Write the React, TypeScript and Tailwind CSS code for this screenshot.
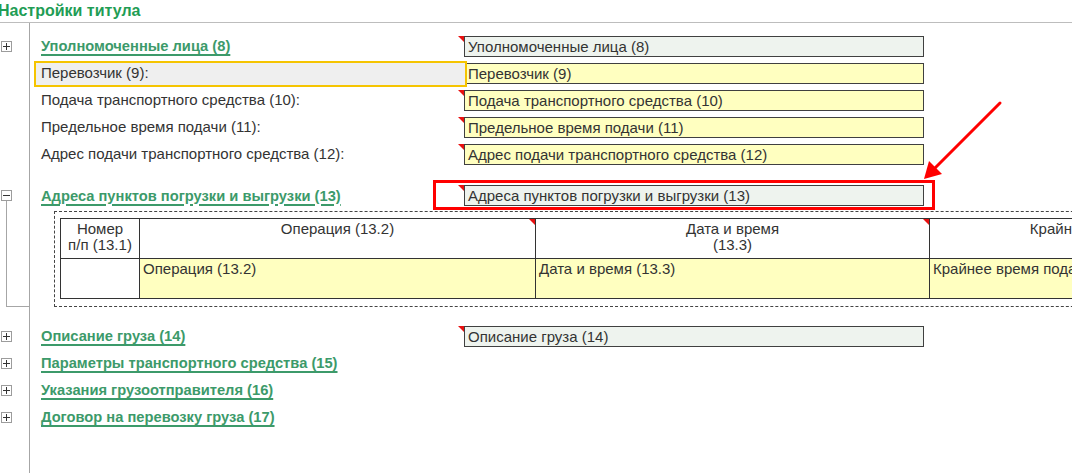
import React from 'react';

const font = { fontFamily: '"Liberation Sans", Arial, sans-serif' };

type Tree = 'plus' | 'minus' | 'none';

const TreeBox = ({ kind }: { kind: Tree }) => {
  if (kind === 'none') return null;
  return (
    <div className="relative w-[11px] h-[11px] border border-[#9c9c9c] bg-white ml-[1px]">
      <div className="absolute left-[1px] top-[4px] w-[7px] h-[1px] bg-[#333]" />
      {kind === 'plus' && <div className="absolute left-[4px] top-[1px] w-[1px] h-[7px] bg-[#333]" />}
    </div>
  );
};

const Corner = ({ className }: { className: string }) => (
  <div
    className={`absolute w-0 h-0 border-t-[6px] border-t-[#e81010] border-l-[6px] border-l-transparent ${className}`}
  />
);

const Field = ({ text, gray }: { text: string; gray?: boolean }) => (
  <div
    className={`relative w-[460px] h-[21px] border border-[#404040] pl-[3px] leading-[19px] text-[15px] text-[#333] whitespace-nowrap ${
      gray ? 'bg-[#eef3ee]' : 'bg-[#ffffc0]'
    }`}
  >
    <Corner className="-left-[7px] -top-[1px]" />
    {text}
  </div>
);

const Gutter = ({ children, className = '' }: { children?: React.ReactNode; className?: string }) => (
  <div className={`w-[30px] shrink-0 border-r border-[#a6a6a6] ${className}`}>{children}</div>
);

const groupText =
  'text-[14.7px] font-bold text-[#3c9a6a] underline decoration-2 underline-offset-[3px] whitespace-nowrap';

const Row = ({
  label,
  field,
  tree = 'none',
  group,
  selected,
  gray,
}: {
  label: string;
  field?: string;
  tree?: Tree;
  group?: boolean;
  selected?: boolean;
  gray?: boolean;
}) => (
  <div className="flex h-[27px]">
    <Gutter className="flex items-center">
      <TreeBox kind={tree} />
    </Gutter>
    <div className="flex items-center">
      <div
        className={`relative ml-[4px] flex items-center ${
          selected
            ? 'z-10 w-[433px] -mr-[3px] h-[26px] border-2 border-[#f5c400] bg-[#efefef] pl-[5px]'
            : 'w-[430px] pl-[7px]'
        }`}
      >
        <span className={group ? groupText : 'text-[15px] text-[#333] whitespace-nowrap'}>{label}</span>
      </div>
      {field && <Field text={field} gray={gray} />}
    </div>
  </div>
);

const Spacer = ({ h }: { h: string }) => (
  <div className={`flex ${h}`}>
    <Gutter />
  </div>
);

const HeadCell = ({ children, mark }: { children: React.ReactNode; mark?: boolean }) => (
  <div className="relative h-[40px] border-r border-b border-[#333] bg-white pt-[2px] text-center text-[15px] leading-[16px] text-[#333] whitespace-nowrap">
    {mark && <Corner className="right-0 top-0" />}
    {children}
  </div>
);

const DataCell = ({ children, white }: { children?: React.ReactNode; white?: boolean }) => (
  <div
    className={`h-[40px] border-r border-b border-[#333] pl-[3px] pt-[2px] text-[15px] leading-[16px] text-[#333] whitespace-nowrap overflow-hidden ${
      white ? 'bg-white' : 'bg-[#ffffc0]'
    }`}
  >
    {children}
  </div>
);

export default function App() {
  return (
    <div className="relative w-[1072px] h-[473px] overflow-hidden bg-white flex flex-col" style={font}>
      <div className="h-[23px] shrink-0 border-b border-[#bdbdbd] flex items-center -ml-[2px]">
        <span className="text-[16px] font-bold text-[#1f9d55]">Настройки титула</span>
      </div>
      <Spacer h="h-[10px]" />
      <Row label="Уполномоченные лица (8)" field="Уполномоченные лица (8)" tree="plus" group gray />
      <Row label="Перевозчик (9):" field="Перевозчик (9)" selected />
      <Row label="Подача транспортного средства (10):" field="Подача транспортного средства (10)" />
      <Row label="Предельное время подачи (11):" field="Предельное время подачи (11)" />
      <Row label="Адрес подачи транспортного средства (12):" field="Адрес подачи транспортного средства (12)" />
      <Spacer h="h-[14px]" />

      <div className="flex">
        <Gutter className="flex flex-col pt-[8px]">
          <TreeBox kind="minus" />
          <div className="ml-[6px] w-[23px] h-[106px] border-l border-b border-[#a6a6a6]" />
        </Gutter>
        <div className="flex flex-col">
          <div className="flex items-center h-[27px]">
            <div className="ml-[4px] w-[430px] pl-[7px]">
              <span className={groupText}>Адреса пунктов погрузки и выгрузки (13)</span>
            </div>
            <Field text="Адреса пунктов погрузки и выгрузки (13)" gray />
          </div>
          <div className="mt-[2px] ml-[24px] w-[1100px] h-[96px] border border-dashed border-[#444] pl-[5px] pt-[6px]">
            <div className="grid grid-cols-[79px_396px_394px_360px] border-l border-t border-[#333]">
              <HeadCell>
                Номер
                <br />
                п/п (13.1)
              </HeadCell>
              <HeadCell mark>Операция (13.2)</HeadCell>
              <HeadCell mark>
                Дата и время
                <br />
                (13.3)
              </HeadCell>
              <HeadCell>
                Крайнее время подачи
                <br />
                (13.4)
              </HeadCell>
              <DataCell white />
              <DataCell>Операция (13.2)</DataCell>
              <DataCell>Дата и время (13.3)</DataCell>
              <DataCell>Крайнее время подачи (13.4)</DataCell>
            </div>
          </div>
        </div>
      </div>

      <Spacer h="h-[16px]" />
      <Row label="Описание груза (14)" field="Описание груза (14)" tree="plus" group gray />
      <Row label="Параметры транспортного средства (15)" tree="plus" group />
      <Row label="Указания грузоотправителя (16)" tree="plus" group />
      <Row label="Договор на перевозку груза (17)" tree="plus" group />
      <div className="flex flex-1">
        <Gutter />
      </div>

      {/* annotation overlay */}
      <div className="absolute left-[433px] top-[180px] w-[502px] h-[30px] border-[3px] border-[#ff0000] pointer-events-none" />
      <svg className="absolute left-0 top-0 pointer-events-none" width="1072" height="473">
        <line x1="1000" y1="103" x2="934" y2="169" stroke="#ff0000" strokeWidth="3" strokeLinecap="round" />
        <polygon points="924,179 929,161 942,174" fill="#ff0000" />
      </svg>
    </div>
  );
}
